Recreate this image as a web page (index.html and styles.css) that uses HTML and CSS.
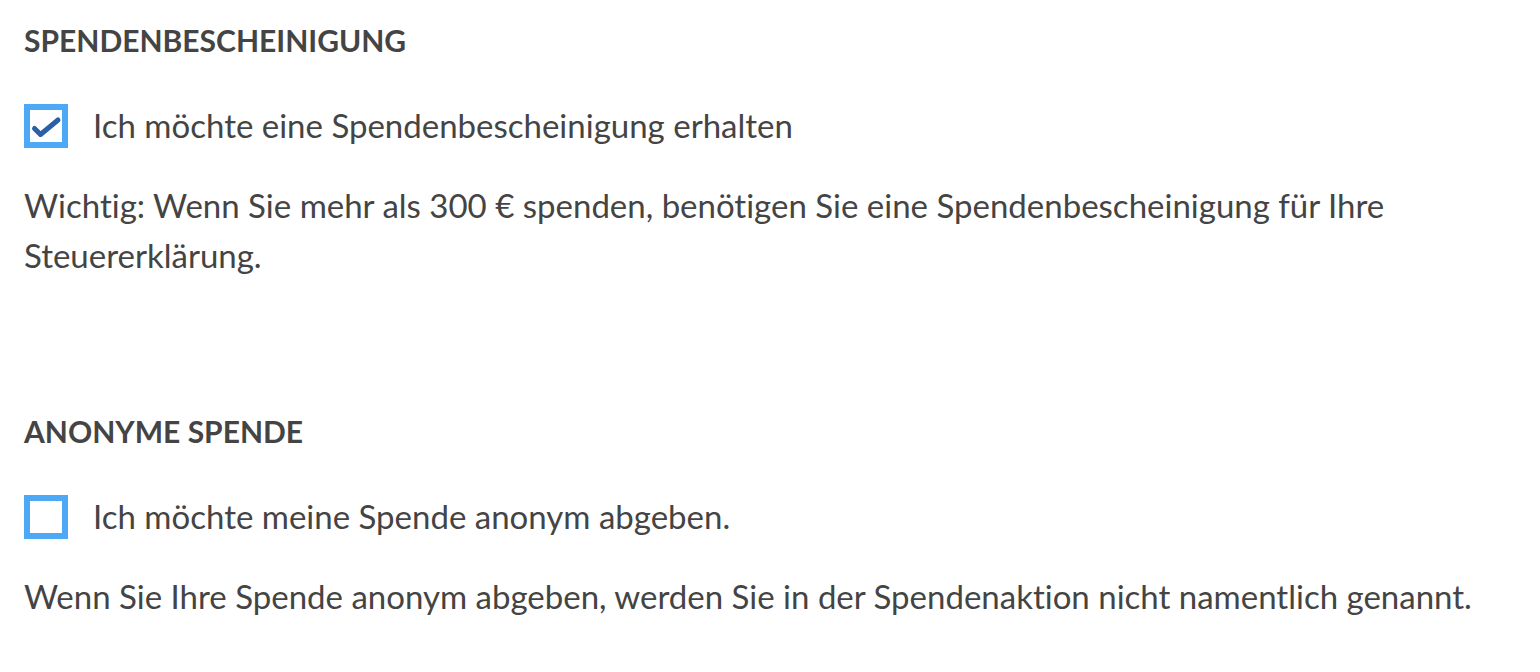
FILE: index.html
```html
<!DOCTYPE html>
<html>
<head>
<title>Spende</title>
<link rel="stylesheet" href="styles.css">
</head>
<body>

<div class="section">
    <h2>Spendenbescheinigung</h2>
    <label class="check-row">
        <span class="box checked">
            <svg viewBox="0 0 32 32" width="32" height="32"><path d="M4.5 18.5 L10.5 24.5 L28 10" /></svg>
        </span>
        <span class="label-text">Ich möchte eine Spendenbescheinigung erhalten</span>
    </label>
    <p>Wichtig: Wenn Sie mehr als 300 € spenden, benötigen Sie eine Spendenbescheinigung für Ihre Steuererklärung.</p>
</div>

<div class="section second">
    <h2>Anonyme Spende</h2>
    <label class="check-row">
        <span class="box"></span>
        <span class="label-text">Ich möchte meine Spende anonym abgeben.</span>
    </label>
    <p>Wenn Sie Ihre Spende anonym abgeben, werden Sie in der Spendenaktion nicht namentlich genannt.</p>
</div>

</body>
</html>
```
FILE: styles.css
```css
body {
    margin: 0;
    padding: 22px 24px 0;
    background: #fff;
    color: #444;
    font-family: Lato, "Open Sans", sans-serif;
    font-variant-ligatures: none;
}

.section {
    width: 1492px;
}

.second {
    margin-top: 133px;
}

h2 {
    margin: 0 0 46px;
    font-size: 30px;
    line-height: 36px;
    font-weight: bold;
    text-transform: uppercase;
    color: #444;
}

.check-row {
    display: flex;
    align-items: center;
    gap: 25px;
    margin-bottom: 32px;
    cursor: pointer;
}

.box {
    width: 44px;
    height: 44px;
    box-sizing: border-box;
    border: 6px solid #4da8f5;
    background: #fff;
    flex-shrink: 0;
}

.box svg {
    display: block;
}

.box path {
    fill: none;
    stroke: #2b5fa6;
    stroke-width: 5;
    stroke-linecap: round;
    stroke-linejoin: round;
}

.label-text {
    font-size: 33px;
    line-height: 44px;
    position: relative;
    top: -1px;
}

p {
    margin: 0;
    font-size: 33px;
    line-height: 50px;
}
```
